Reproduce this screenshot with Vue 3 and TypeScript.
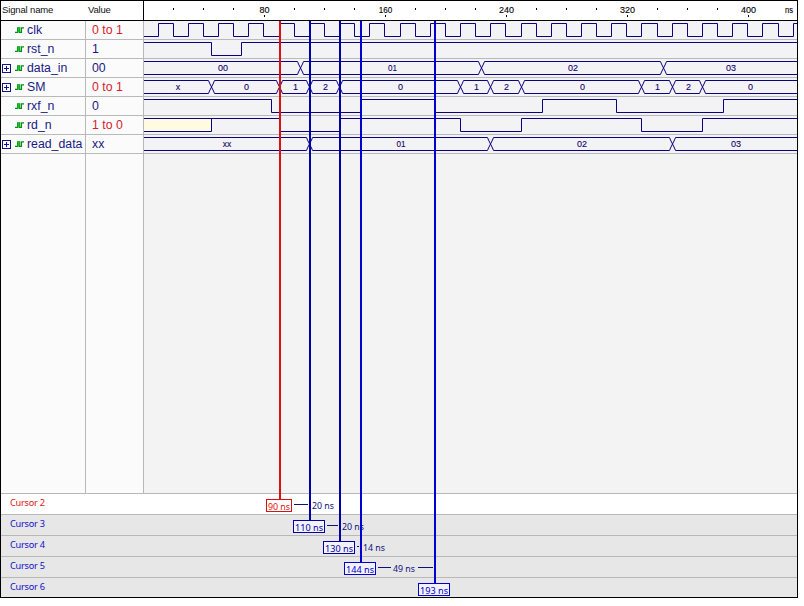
<script setup lang="ts">
interface Segment { from: number; to: number; label: string; labelX: number; width: number }
interface Signal {
  name: string
  value: string
  changed?: boolean
  bus?: Segment[]
  start?: 0 | 1
  edges?: number[]
  unknownUntil?: number
}
interface Cursor {
  name: string; label: string; x: number; boxX: number; boxWidth: number
  active?: boolean; tone: string
  gap?: string; gapX?: number; dashes?: [number, number][]
}

const END = 440
const WAVE_WIDTH = 653
const px = (t: number): number => Math.min(Math.floor(t * 1.512 + 0.001), WAVE_WIDTH + 6)

const seg = (from: number, to: number, label: string, labelX: number, width: number): Segment =>
  ({ from, to, label, labelX, width })

const clockEdges = Array.from({ length: 43 }, (_, i) => (i + 1) * 10)

const signals: Signal[] = [
  { name: 'clk', value: '0 to 1', changed: true, start: 0, edges: clockEdges },
  { name: 'rst_n', value: '1', start: 1, edges: [45, 65] },
  { name: 'data_in', value: '00', bus: [
    seg(0, 104, '00', 79, 10), seg(104, 224, '01', 248.5, 9),
    seg(224, 344, '02', 429, 10), seg(344, END, '03', 587, 10)] },
  { name: 'SM', value: '0 to 1', changed: true, bus: [
    seg(0, 45, 'x', 34, 4.5), seg(45, 90, '0', 102.5, 5), seg(90, 110, '1', 151.5, 5),
    seg(110, 130, '2', 181.5, 5), seg(130, 210, '0', 256.5, 5), seg(210, 230, '1', 332.5, 5),
    seg(230, 250, '2', 362.5, 5), seg(250, 330, '0', 438.5, 5), seg(330, 350, '1', 513.5, 5),
    seg(350, 370, '2', 544.5, 5), seg(370, END, '0', 606.5, 5)] },
  { name: 'rxf_n', value: '0', start: 1, edges: [85, 144, 193, 264, 313, 384] },
  { name: 'rd_n', value: '1 to 0', changed: true, start: 1, unknownUntil: 45, edges: [90, 130, 210, 250, 330, 370] },
  { name: 'read_data', value: 'xx', bus: [
    seg(0, 110, 'xx', 83, 8.5), seg(110, 230, '01', 257, 9),
    seg(230, 350, '02', 438, 10), seg(350, END, '03', 592, 10)] },
]

const HIGH = 2.5
const LOW = 15.5

function levelPath(s: Signal): string {
  let y = s.start ? HIGH : LOW
  let d = `M0 ${y}`
  for (const t of s.edges ?? []) {
    const x = px(t) - 0.5
    y = y === HIGH ? LOW : HIGH
    d += `H${x}V${y}`
  }
  return d + `H${WAVE_WIDTH}`
}

function busPath(s: Signal): string {
  return (s.bus ?? []).map((b) => {
    const a = px(b.from) - 0.5
    const z = px(b.to) - 0.5
    const left = b.from === 0 ? 0 : a + 3
    const right = b.to === END ? WAVE_WIDTH : z - 3
    let d = `M${left} ${HIGH}H${right}M${left} ${LOW}H${right}`
    if (b.to !== END) d += `M${z - 3} ${HIGH}L${z - 2} 5L${z + 2} 13L${z + 3} ${LOW}M${z - 3} ${LOW}L${z - 2} 13L${z + 2} 5L${z + 3} ${HIGH}`
    return d
  }).join('')
}

const ticks = Array.from({ length: 20 }, (_, i) => (i + 1) * 20)
const majors = [80, 160, 240, 320, 400]

const cursors: Cursor[] = [
  { name: 'Cursor 2', label: '90 ns', x: 279, boxX: 266, boxWidth: 26, active: true, tone: 'red', gap: '20 ns', gapX: 312, dashes: [[294, 308]] },
  { name: 'Cursor 3', label: '110 ns', x: 309, boxX: 293, boxWidth: 32, tone: 'deep', gap: '20 ns', gapX: 342, dashes: [[327, 338]] },
  { name: 'Cursor 4', label: '130 ns', x: 339, boxX: 323, boxWidth: 32, tone: 'deep', gap: '14 ns', gapX: 363, dashes: [[357, 359]] },
  { name: 'Cursor 5', label: '144 ns', x: 360, boxX: 344, boxWidth: 32, tone: 'blue', gap: '49 ns', gapX: 393, dashes: [[378, 391], [418, 433]] },
  { name: 'Cursor 6', label: '193 ns', x: 434, boxX: 418, boxWidth: 32, tone: 'blue' },
]
const cursorTop = (i: number): number => 499 + i * 21
</script>

<template>
  <main class="viewer">
    <header class="header">
      <div class="title-name">Signal name</div>
      <div class="title-value">Value</div>
      <svg class="ruler" width="653" height="20">
        <template v-for="t in ticks" :key="t">
          <rect v-if="!majors.includes(t)" :x="px(t) - 1" y="7" width="1" height="2" />
          <rect v-else :x="px(t)" y="14" width="1" height="2" />
        </template>
        <text v-for="t in majors" :key="'l' + t" :x="px(t) + 0.5" y="12" text-anchor="middle" :textLength="t === 80 ? 10 : t === 160 ? 13.5 : 15" lengthAdjust="spacingAndGlyphs">{{ t }}</text>
        <text x="641" y="12" textLength="8" lengthAdjust="spacingAndGlyphs">ns</text>
      </svg>
    </header>

    <section class="signals">
      <div v-for="s in signals" :key="s.name" class="row">
        <div class="name">
          <span class="expander"><svg v-if="s.bus" width="9" height="9" fill="none" stroke="#12128a"><rect x=".5" y=".5" width="8" height="8" /><path d="M2 4.5h5M4.5 2v5" /></svg></span>
          <svg class="pulse" width="9" height="6"><path d="M0 5.3H2.7V.8H4.5V5.3H6.4V.8H9" fill="none" stroke="#009010" stroke-width="1.3" /><path d="M2.7 1H4.5V5H2.7z" fill="#20c030" /></svg>
          <span>{{ s.name }}</span>
        </div>
        <div class="value" :class="{ changed: s.changed }">{{ s.value }}</div>
        <svg class="wave" width="653" height="18">
          <template v-if="s.unknownUntil">
            <rect x="0" y="3" :width="px(s.unknownUntil)" height="12" fill="#fffbe0" />
            <path :d="`M0 15.5H${px(s.unknownUntil) - 0.5}V2.5`" />
          </template>
          <path :d="s.bus ? busPath(s) : levelPath(s)" />
          <text v-for="b in s.bus" :key="b.from" :x="b.labelX" y="12" text-anchor="middle" :textLength="b.width" lengthAdjust="spacingAndGlyphs">{{ b.label }}</text>
        </svg>
      </div>
      <div class="filler"><div /><div /><div /></div>
    </section>

    <footer>
      <div v-for="c in cursors" :key="c.name" class="cursor-row" :class="{ active: c.active }">{{ c.name }}</div>
    </footer>

    <svg class="overlay" width="798" height="598">
      <g v-for="(c, i) in cursors" :key="c.name" :class="c.tone">
        <text v-if="c.gap" class="gap" :x="c.gapX" :y="cursorTop(i) + 10" textLength="22" lengthAdjust="spacingAndGlyphs">{{ c.gap }}</text>
        <rect v-for="d in c.dashes" :key="d[0]" class="dash" :x="d[0]" :y="cursorTop(i) + 5" :width="d[1] - d[0]" height="1" />
      </g>
      <g v-for="(c, i) in cursors" :key="c.label" :class="c.tone">
        <rect class="line" :x="c.x" y="21" width="2" :height="cursorTop(i) - 21" />
        <rect class="box" :x="c.boxX + 0.5" :y="cursorTop(i) + 0.5" :width="c.boxWidth - 1" height="12" />
        <text class="time" :x="c.boxX + 2" :y="cursorTop(i) + 11" :textLength="c.boxWidth - 4" lengthAdjust="spacingAndGlyphs">{{ c.label }}</text>
      </g>
    </svg>
  </main>
</template>

<style>
body { background: #fff; }
</style>

<style scoped>
.viewer { position: relative; box-sizing: border-box; width: 798px; height: 598px; border: 1px solid #000; display: flex; flex-direction: column; background: #fff; font-family: "Liberation Sans", Arial, sans-serif; }
.header { display: grid; grid-template-columns: 84px 58px 1fr; height: 19px; flex: none; border-bottom: 1px solid #000; font-size: 9.5px; line-height: 18px; color: #111; white-space: nowrap; }
.title-name { padding-left: 1px; letter-spacing: -0.15px; }
.title-value { padding-left: 3px; letter-spacing: -0.2px; }
.ruler { display: block; border-left: 1px solid #000; height: 20px; }
.ruler text { font-size: 8.8px; fill: #000; stroke: #000; stroke-width: .12px; }
.signals { flex: 1; display: flex; flex-direction: column; background: #f3f3f3; }
.row { display: grid; grid-template-columns: 85px 57px 1fr; height: 18px; flex: none; border-bottom: 1px solid #b8bab8; }
.name, .value { box-sizing: border-box; background: #fbfbfb; font-size: 12.3px; line-height: 18px; color: #191984; white-space: nowrap; }
.name { display: flex; align-items: center; border-right: 1px solid #b8b8b8; }
.value { padding-left: 6px; }
.value.changed { color: #d81b2c; }
.expander { width: 9px; height: 9px; margin: 0 4px 0 1px; display: flex; }
.pulse { margin: 0 3px 0 0; flex: none; }
.wave { display: block; width: 653px; height: 18px; border-left: 1px solid #b8b8b8; background: #f3f3f5; }
.wave path { fill: none; stroke: #0c0080; stroke-width: 1; }
.wave text { font-size: 8.8px; fill: #0c0068; stroke: #0c0068; stroke-width: .1px; }
.filler { flex: 1; display: grid; grid-template-columns: 85px 57px 1fr; }
.filler div { background: #fbfbfb; }
.filler div:first-child { border-right: 1px solid #b8b8b8; }
.filler div:last-child { border-left: 1px solid #b8b8b8; background: #f3f3f3; }
footer { flex: none; font: 9.2px/17px "Noto Sans", "DejaVu Sans", sans-serif; }
.cursor-row { height: 20px; border-top: 1px solid #b8b8b8; background: #e7e7e7; color: #1010c8; padding-left: 9px; letter-spacing: -0.25px; }
.cursor-row:last-child { height: 19px; }
.cursor-row.active { background: #fff; color: #dc1414; }
.overlay { position: absolute; left: -1px; top: -1px; font: 9.2px "Noto Sans", "DejaVu Sans", sans-serif; }
.red { --c: #dc1010; --bg: #fff; }
.deep { --c: #0000a8; --bg: #f2f2f8; }
.blue { --c: #0000d2; --bg: #f2f2f8; }
.line { fill: var(--c); }
.box { fill: var(--bg); stroke: var(--c); }
.time { fill: var(--c); }
.gap, .dash { fill: #10107c; }
</style>
